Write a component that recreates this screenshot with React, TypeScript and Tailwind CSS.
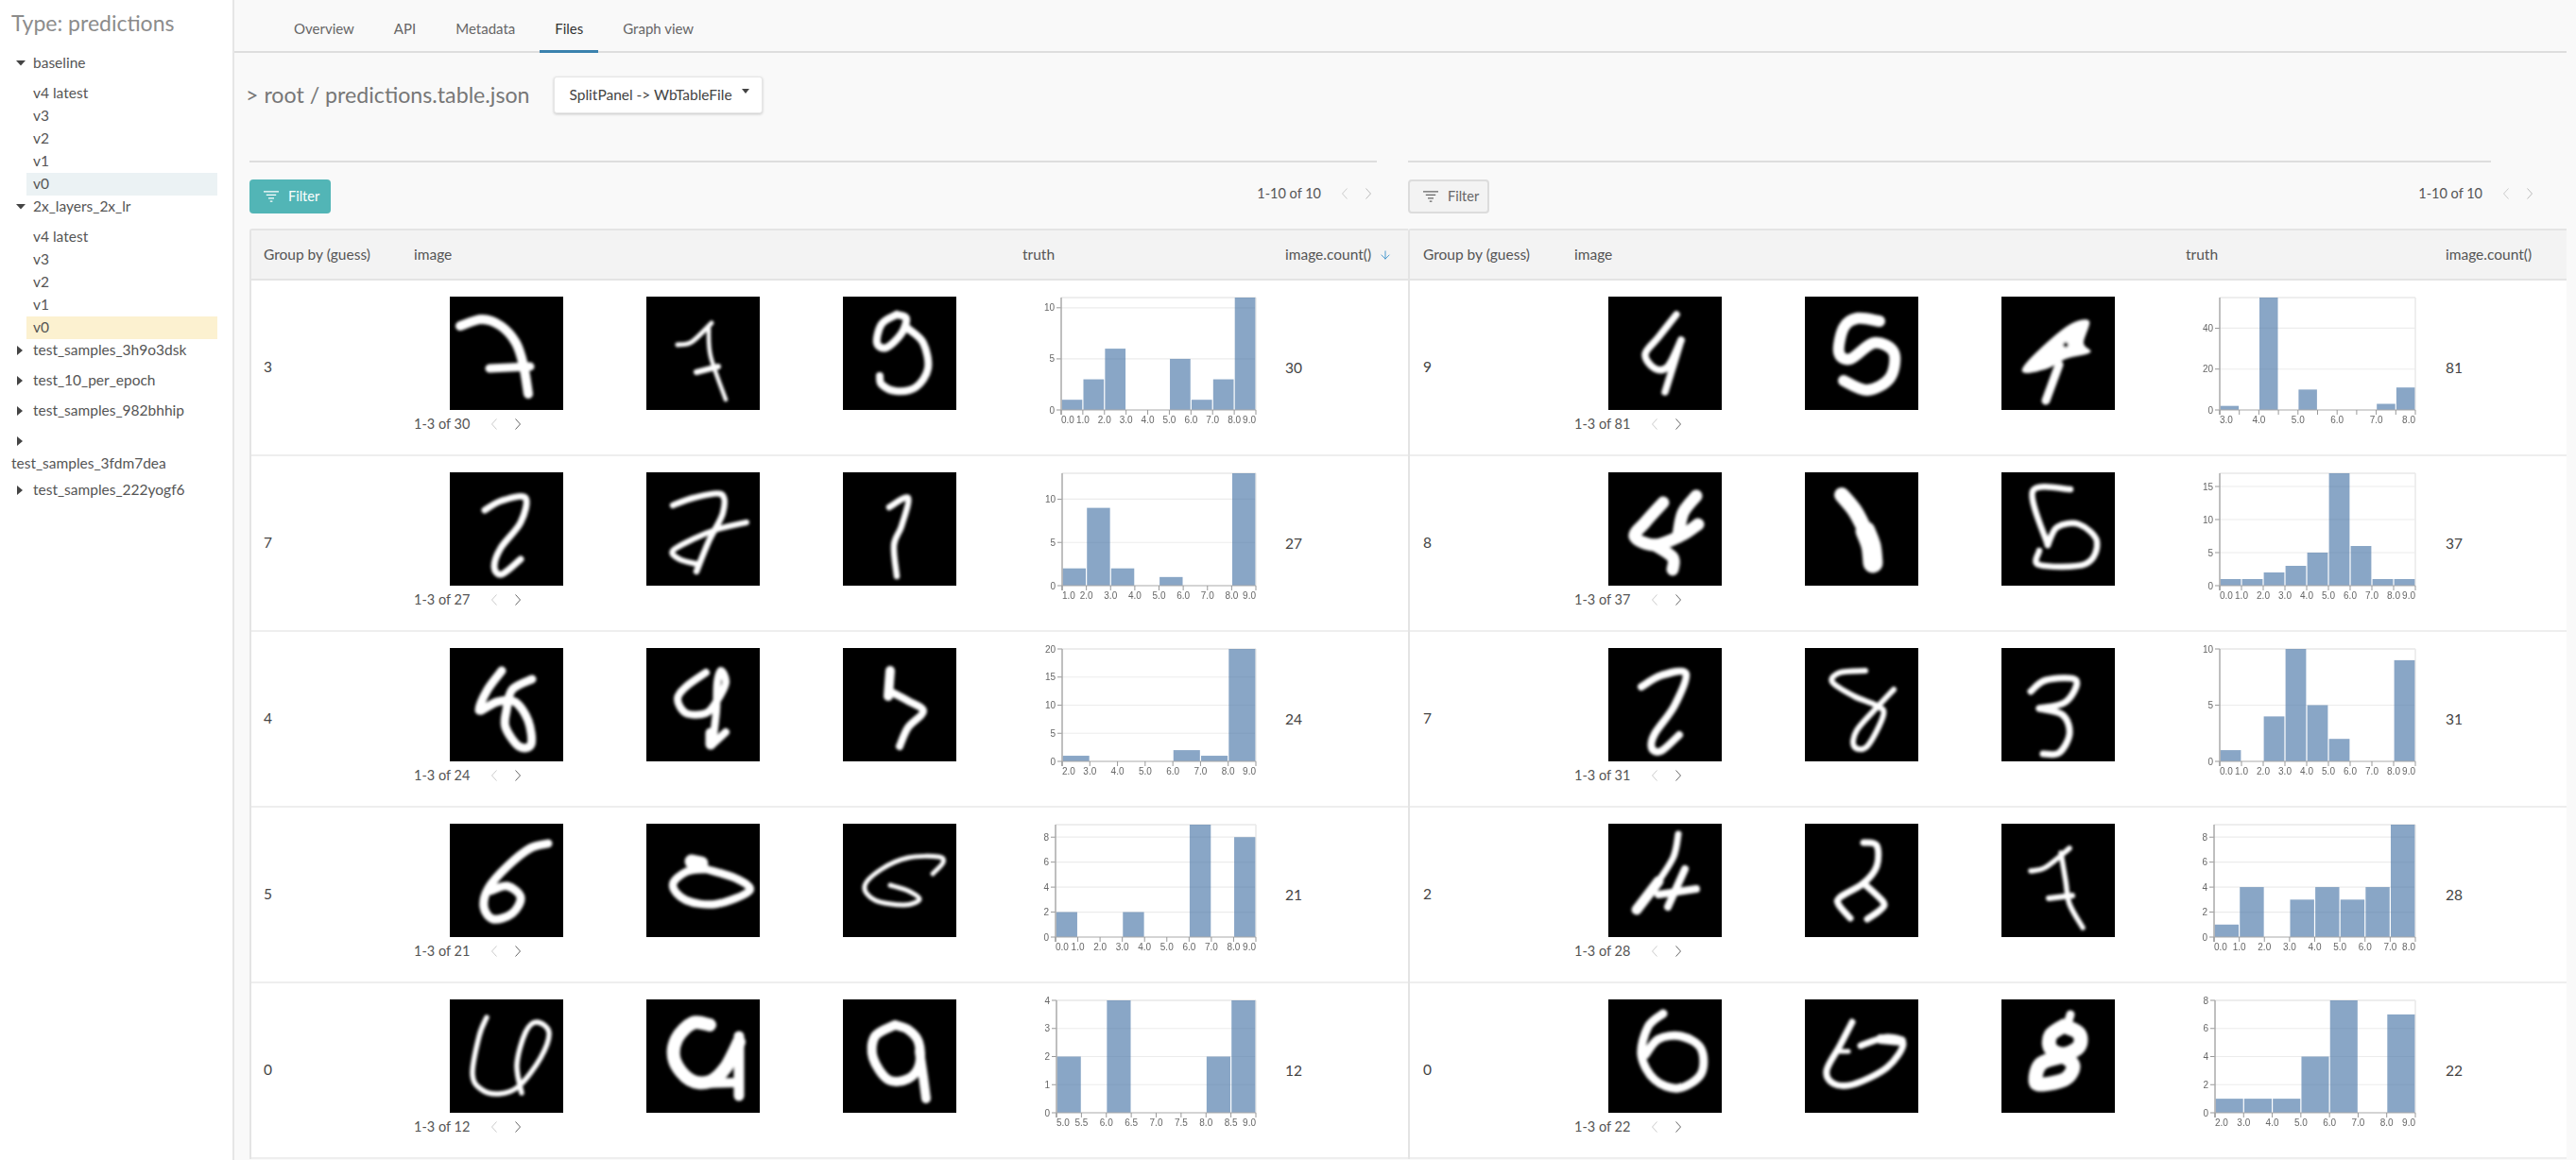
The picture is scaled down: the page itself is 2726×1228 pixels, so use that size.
import { ArrowDown } from "lucide-react";

type Stroke = number[];

type ChartSpec = {
  left: number;
  start: number;
  step: number;
  values: number[];
  ymax: number;
  yticks: number[];
  labelEvery?: number;
};

type Row = {
  group: string;
  count: number;
  digits: Stroke[][];
  chart: ChartSpec;
};

const tabs = ["Overview", "API", "Metadata", "Files", "Graph view"];
const versions = ["v4 latest", "v3", "v2", "v1", "v0"];

// catmull-rom through the traced points. w > 0 stroke, w = 0 white blob, w = -1 black hole
function smooth(p: number[], closed: boolean) {
  const pts: number[][] = [];
  for (let i = 0; i < p.length; i += 2) pts.push([p[i], p[i + 1]]);
  const n = pts.length;
  const at = (i: number) =>
    closed ? pts[(i + n) % n] : pts[Math.max(0, Math.min(n - 1, i))];
  let d = `M${pts[0][0]} ${pts[0][1]}`;
  const last = closed ? n : n - 1;
  for (let i = 0; i < last; i++) {
    const [a, b, c, e] = [at(i - 1), at(i), at(i + 1), at(i + 2)];
    d += `C${b[0] + (c[0] - a[0]) / 6} ${b[1] + (c[1] - a[1]) / 6} ${c[0] - (e[0] - b[0]) / 6} ${c[1] - (e[1] - b[1]) / 6} ${c[0]} ${c[1]}`;
  }
  return d + (closed ? "Z" : "");
}

function Digit({ strokes }: { strokes: Stroke[] }) {
  return (
    <svg width="120" height="120" viewBox="0 0 120 120" className="shrink-0 bg-black">
      <defs>
        <filter id="mnist" x="0" y="0" width="120" height="120" filterUnits="userSpaceOnUse">
          <feGaussianBlur stdDeviation="1.7" />
        </filter>
      </defs>
      <g filter="url(#mnist)">
        {strokes.map(([w, ...p], i) =>
          w > 0 ? (
            <path key={i} d={smooth(p, false)} fill="none" stroke="#fff" strokeWidth={w + 1} strokeLinecap="round" strokeLinejoin="round" />
          ) : (
            <path key={i} d={smooth(p, true)} fill={w === 0 ? "#fff" : "#000"} />
          ),
        )}
      </g>
    </svg>
  );
}

function Chart({ spec, right }: { spec: ChartSpec; right: number }) {
  const { left, start, step, values, ymax, yticks, labelEvery = 1 } = spec;
  const top = 18;
  const bottom = 137;
  const bw = (right - left) / values.length;
  const y = (v: number) => bottom - (v / ymax) * (bottom - top);
  const ticks = Array.from({ length: values.length + 1 }, (_, i) => i);
  return (
    <svg width="278" height="160" className="block font-['Liberation_Sans',sans-serif] blur-[0.4px]">
      <line x1={left} x2={right} y1={top} y2={top} stroke="#e8e8e8" strokeWidth="1.5" />
      <line x1={right} x2={right} y1={top} y2={bottom} stroke="#e8e8e8" strokeWidth="1.5" />
      {yticks.map((t) => (
        <g key={t}>
          {t > 0 && <line x1={left} x2={right} y1={y(t)} y2={y(t)} stroke="#ececec" strokeWidth="1.2" />}
          <line x1={left - 5} x2={left} y1={y(t)} y2={y(t)} stroke="#999" />
          <text x={left - 7} y={y(t) + 3.5} textAnchor="end" fontSize="10" fill="#666">
            {t}
          </text>
        </g>
      ))}
      {values.map((v, i) =>
        v > 0 ? (
          <rect key={i} x={left + i * bw + 0.6} y={y(v)} width={bw - 1.2} height={bottom - y(v)} fill="#4c78a8" fillOpacity="0.66" />
        ) : null,
      )}
      <line x1={left} x2={left} y1={top} y2={bottom + 5} stroke="#aaa" strokeWidth="1.5" />
      <line x1={left} x2={right} y1={bottom} y2={bottom} stroke="#aaa" strokeWidth="1.2" />
      {ticks.map((i) => {
        const x = left + i * bw;
        const anchor = i === 0 ? "start" : i === values.length ? "end" : "middle";
        return (
          <g key={i}>
            <line x1={x} x2={x} y1={bottom} y2={bottom + 5} stroke="#999" />
            {i % labelEvery === 0 && (
              <text x={x} y={bottom + 14} textAnchor={anchor} fontSize="10" fill="#666">
                {(start + i * step).toFixed(1)}
              </text>
            )}
          </g>
        );
      })}
    </svg>
  );
}

function Pager({ dark = "#666" }: { dark?: string }) {
  return (
    <div className="flex items-center gap-[17px]">
      <svg width="8" height="14" viewBox="0 0 8 14" fill="none" stroke="#ccc" strokeWidth="1">
        <path d="M6.5 1.5 1.5 7l5 5.5" />
      </svg>
      <svg width="8" height="14" viewBox="0 0 8 14" fill="none" stroke={dark} strokeWidth="1">
        <path d="M1.5 1.5 6.5 7l-5 5.5" />
      </svg>
    </div>
  );
}

function FilterIcon({ color }: { color: string }) {
  return (
    <svg width="16" height="12" viewBox="0 0 16 12" fill="none" stroke={color} strokeWidth="1.2">
      <path d="M0 .8h16M2.8 4.3h10.4M5 7.8h6M6.8 11.2h2.6" />
    </svg>
  );
}

function Caret({ open }: { open: boolean }) {
  return open ? (
    <svg width="10" height="6" viewBox="0 0 10 6" className="absolute left-[5px] top-[9px]">
      <path d="M0 0h10L5 5.5z" fill="#444" />
    </svg>
  ) : (
    <svg width="6" height="10" viewBox="0 0 6 10" className="absolute left-[6px] top-[7px]">
      <path d="M0 0l6 5-6 5z" fill="#444" />
    </svg>
  );
}

function TreeGroup({ name, open = false, selected }: { name: string; open?: boolean; selected?: string }) {
  return (
    <div>
      <div className="relative mb-2 flex h-6 items-center pl-[23px] text-[#555]">
        <Caret open={open} />
        {name}
      </div>
      {open &&
        versions.map((v) => (
          <div
            key={v}
            className={`ml-4 flex h-6 w-[202px] items-center pl-[7px] text-[#555] ${v === "v0" ? selected : ""}`}
          >
            {v}
          </div>
        ))}
    </div>
  );
}

function Table({
  rows,
  cols,
  right,
  imgPad,
  cellPad,
  sortArrow,
}: {
  rows: Row[];
  cols: string;
  right: number;
  imgPad: string;
  cellPad: string;
  sortArrow?: boolean;
}) {
  return (
    <div className="border-l-2 border-t-2 border-[#e4e4e4] rounded-tl-[3px]">
      <div className={`grid h-[53px] items-center border-b-2 border-[#e4e4e4] bg-[#f3f3f3] text-[#555] ${cols}`}>
        <div className={cellPad}>Group by (guess)</div>
        <div className={cellPad}>image</div>
        <div className={cellPad}>truth</div>
        <div className={`flex items-center gap-2 ${cellPad}`}>
          image.count()
          {sortArrow && <ArrowDown size={14} strokeWidth={1.6} className="text-[#3f94cc]" />}
        </div>
      </div>
      {rows.map((r) => (
        <div key={r.group + r.count} className={`grid h-[186px] border-b-2 border-[#eeeeee] bg-white text-[#444] ${cols}`}>
          <div className={`flex items-center ${cellPad}`}>{r.group}</div>
          <div className="pt-[17px]">
            <div className={`flex gap-[88px] ${imgPad}`}>
              {r.digits.map((d, i) => (
                <Digit key={i} strokes={d} />
              ))}
            </div>
            <div className={`mt-[5px] flex h-5 items-center gap-[22px] text-[14.5px] text-[#555] ${cellPad}`}>
              <span>1-3 of {r.count}</span>
              <Pager />
            </div>
          </div>
          <div>
            <Chart spec={r.chart} right={right} />
          </div>
          <div className={`flex items-center pt-0.5 ${cellPad}`}>{r.count}</div>
        </div>
      ))}
    </div>
  );
}

const leftRows: Row[] = [
  {
    group: "3",
    count: 30,
    digits: [
      [[9, 11, 31, 34, 24, 54, 31, 70, 49, 78, 73, 83, 103], [8, 42, 76, 85, 74]],
      [[4, 33, 51, 48, 48, 69, 28], [3.5, 66, 33, 68, 63, 84, 109], [5, 53, 80, 76, 74]],
      [[7, 57, 19, 41, 29, 36, 49, 46, 54, 62, 39, 67, 23, 57, 19], [7, 69, 34, 85, 49, 90, 76, 77, 96, 56, 100, 41, 93, 39, 84]],
    ],
    chart: { left: 54, start: 0, step: 1, values: [1, 3, 6, 0, 0, 5, 1, 3, 11], ymax: 11, yticks: [0, 5, 10] },
  },
  {
    group: "7",
    count: 27,
    digits: [
      [[6, 37, 40, 55, 30, 80, 27, 75, 53, 54, 80, 47, 100, 55, 108, 75, 92]],
      [[5.5, 28, 35, 50, 27, 79, 23, 81, 43, 66, 73, 53, 105], [5, 106, 53, 76, 60, 51, 70, 28, 83, 35, 92, 53, 97]],
      [[5.5, 49, 37, 69, 27, 62, 57, 54, 77, 57, 110]],
    ],
    chart: { left: 55, start: 1, step: 1, values: [2, 9, 2, 0, 1, 0, 0, 13], ymax: 13, yticks: [0, 5, 10] },
  },
  {
    group: "4",
    count: 24,
    digits: [
      [[8, 55, 24, 40, 44, 31, 66, 50, 57, 69, 57, 83, 77, 86, 102, 73, 104, 59, 84, 60, 66, 66, 44, 87, 33]],
      [[7, 63, 26, 42, 41, 33, 54, 42, 69, 63, 69, 74, 57, 84, 37, 79, 24, 75, 37, 74, 67, 70, 101], [7, 70, 102, 84, 89], [10, 68, 90, 68, 102]],
      [[9, 50, 24, 48, 51], [7, 50, 46, 69, 56, 85, 67, 69, 84, 60, 104]],
    ],
    chart: { left: 55, start: 2, step: 1, values: [1, 0, 0, 0, 2, 1, 20], ymax: 20, yticks: [0, 5, 10, 15, 20] },
  },
  {
    group: "5",
    count: 21,
    digits: [
      [[8, 104, 21, 85, 26, 61, 45, 41, 68, 36, 88, 46, 101, 66, 95, 75, 78, 61, 66, 43, 71]],
      [[7.5, 63, 48, 42, 51, 28, 65, 42, 81, 74, 85, 109, 71, 95, 58, 63, 48], [14, 48, 40, 58, 42]],
      [[4, 95, 53, 106, 41, 101, 35, 69, 36, 41, 48, 23, 66, 34, 81, 65, 86, 81, 80, 69, 71, 50, 65]],
    ],
    chart: { left: 48, start: 0, step: 1, values: [2, 0, 0, 2, 0, 0, 9, 0, 8], ymax: 9, yticks: [0, 2, 4, 6, 8] },
  },
  {
    group: "0",
    count: 12,
    digits: [
      [[4.5, 39, 19, 31, 39, 24, 79, 33, 95, 52, 100, 73, 92, 96, 62, 105, 35, 92, 24, 80, 35, 71, 69, 76, 99]],
      [[13, 67, 27, 49, 25, 32, 42, 30, 65, 46, 85, 67, 87, 84, 72, 98, 45], [10, 98, 39, 98, 102], [9, 56, 89, 95, 88]],
      [[9, 55, 27, 34, 39, 32, 62, 48, 85, 69, 84, 81, 69, 80, 45, 69, 32, 55, 27], [9, 81, 55, 85, 82, 88, 105]],
    ],
    chart: { left: 49, start: 5, step: 0.5, values: [2, 0, 4, 0, 0, 0, 2, 4], ymax: 4, yticks: [0, 1, 2, 3, 4] },
  },
];

const rightRows: Row[] = [
  {
    group: "9",
    count: 81,
    digits: [
      [[6.5, 72, 19, 53, 43, 39, 61, 49, 76, 63, 74, 77, 46], [6.5, 77, 46, 70, 69, 60, 101]],
      [[11, 79, 26, 55, 23, 41, 33, 36, 59, 48, 66, 73, 49, 94, 59, 90, 86, 66, 99, 41, 89]],
      [[0, 93, 26, 75, 28, 51, 46, 24, 73, 26, 81, 49, 76, 68, 66, 94, 59, 87, 49], [8, 61, 72, 47, 110], [-1, 68, 48, 71, 51, 68, 54, 65, 51]],
    ],
    chart: { left: 50, start: 3, step: 0.5, values: [2, 0, 55, 0, 10, 0, 0, 0, 3, 11], ymax: 55, yticks: [0, 20, 40], labelEvery: 2 },
  },
  {
    group: "8",
    count: 37,
    digits: [
      [[12, 58, 32, 39, 53, 28, 68, 49, 77, 77, 67, 95, 55], [12, 49, 77, 68, 90, 68, 103], [12, 93, 25, 79, 43, 74, 67]],
      [[15, 39, 24, 53, 41, 64, 62], [20, 64, 62, 70, 78, 72, 96]],
      [[5.5, 73, 18, 33, 20, 49, 77], [5.5, 49, 77, 59, 58, 82, 55, 101, 73, 89, 97, 40, 98, 40, 83]],
    ],
    chart: { left: 50, start: 0, step: 1, values: [1, 1, 2, 3, 5, 17, 6, 1, 1], ymax: 17, yticks: [0, 5, 10, 15] },
  },
  {
    group: "7",
    count: 31,
    digits: [
      [[7, 35, 41, 56, 29, 82, 27, 70, 61, 49, 91, 46, 106, 56, 109, 75, 92]],
      [[5, 64, 24, 37, 26, 29, 36, 52, 51, 76, 61, 83, 71, 66, 104, 52, 104, 55, 87, 78, 61, 94, 44]],
      [[6, 31, 46, 47, 34, 79, 34, 68, 57, 40, 64], [6, 40, 64, 65, 71, 72, 91, 61, 111, 44, 112]],
    ],
    chart: { left: 50, start: 0, step: 1, values: [1, 0, 4, 10, 5, 2, 0, 0, 9], ymax: 10, yticks: [0, 5, 10] },
  },
  {
    group: "2",
    count: 28,
    digits: [
      [[6, 74, 11, 69, 35, 53, 61], [10, 53, 61, 30, 91], [7, 81, 48, 63, 88], [7, 93, 69, 53, 75]],
      [[6, 62, 20, 76, 23, 76, 45, 62, 63, 37, 78, 36, 86, 48, 100], [6, 62, 63, 83, 83, 80, 91, 66, 101]],
      [[4.5, 31, 50, 47, 46, 72, 26], [4.5, 63, 31, 68, 61, 72, 85, 86, 110], [5, 50, 79, 75, 76]],
    ],
    chart: { left: 44, start: 0, step: 1, values: [1, 4, 0, 3, 4, 3, 4, 9], ymax: 9, yticks: [0, 2, 4, 6, 8] },
  },
  {
    group: "0",
    count: 22,
    digits: [
      [[8, 58, 15, 42, 29, 35, 59, 49, 85, 74, 94, 98, 79, 98, 52, 77, 39, 53, 42, 39, 59]],
      [[6, 50, 24, 37, 49, 23, 75, 30, 89, 51, 90, 87, 72, 104, 47, 87, 40, 59, 49], [4, 37, 55, 46, 55], [9, 80, 42, 102, 44]],
      [
        [14, 66, 28, 82, 36, 82, 50, 66, 58, 52, 52, 52, 38, 66, 28],
        [14, 66, 60, 76, 70, 68, 84, 44, 90, 36, 86, 42, 68, 66, 60],
        [8, 73, 16, 70, 26],
      ],
    ],
    chart: { left: 45, start: 2, step: 1, values: [1, 1, 1, 4, 8, 0, 7], ymax: 8, yticks: [0, 2, 4, 6, 8] },
  },
];

export default function App() {
  return (
    <div className="flex h-[1228px] w-full overflow-hidden bg-white font-['Lato',sans-serif] text-[15.5px]">
      <aside className="w-[248px] shrink-0 border-r-2 border-[#e6e6e6] pl-3">
        <h1 className="flex h-[55px] items-center pb-[7px] text-[23px] text-[#8c8c8c]">Type: predictions</h1>
        <TreeGroup name="baseline" open selected="bg-[#ebf2f4]" />
        <TreeGroup name="2x_layers_2x_lr" open selected="bg-[#fcf1d0]" />
        <TreeGroup name="test_samples_3h9o3dsk" />
        <TreeGroup name="test_10_per_epoch" />
        <TreeGroup name="test_samples_982bhhip" />
        <div className="relative h-6">
          <Caret open={false} />
        </div>
        <div className="mb-1 flex h-6 items-center text-[#555]">test_samples_3fdm7dea</div>
        <TreeGroup name="test_samples_222yogf6" />
      </aside>

      <main className="min-w-0 flex-1 bg-[#f9f9f9]">
        <nav className="mr-2.5 flex h-14 gap-2.5 border-b-2 border-[#dedede] pl-[47px]">
          {tabs.map((t) => (
            <div
              key={t}
              className={`-mb-0.5 flex items-center border-b-[3px] px-4 pt-2 text-[15px] ${t === "Files" ? "border-[#3b82ae] text-[#333]" : "border-transparent text-[#666]"}`}
            >
              {t}
            </div>
          ))}
        </nav>

        <div className="pl-4">
          <div className="mt-[25px] flex h-[39px] items-center gap-[25px]">
            <h2 className="-ml-1 text-[23.2px] text-[#777]">&gt; root / predictions.table.json</h2>
            <button
              type="button"
              className="flex h-[39px] w-[221px] items-center justify-between rounded-[3px] border border-[#e6e6e6] bg-white pl-4 pr-[13px] text-[15.5px] text-[#444] shadow-[0_1px_3px_rgba(0,0,0,0.2)]"
            >
              SplitPanel -&gt; WbTableFile
              <svg width="8" height="5" viewBox="0 0 8 5" className="mb-2">
                <path d="M0 0h8L4 5z" fill="#444" />
              </svg>
            </button>
          </div>

          <div className="mt-[50px] flex">
            <section className="w-[1226px] shrink-0">
              <div className="h-0.5 w-[1193px] bg-[#dedede]" />
              <div className="mt-[18px] flex h-9 items-start justify-between pr-[38px]">
                <button type="button" className="flex h-9 w-[86px] items-center gap-2.5 rounded-[4px] bg-[#52b5b6] pl-[15px] text-[14.5px] text-white">
                  <FilterIcon color="#fff" />
                  Filter
                </button>
                <div className="flex h-[30px] items-center gap-[21px] text-[14.5px] text-[#555]">
                  <span>1-10 of 10</span>
                  <Pager dark="#bbb" />
                </div>
              </div>
              <div className="mt-4">
                <Table rows={leftRows} cols="grid-cols-[159px_644px_278px_1fr]" right={260} imgPad="pl-[51px]" cellPad="pl-[13px]" sortArrow />
              </div>
            </section>

            <section className="w-[1226px] shrink-0">
              <div className="h-0.5 w-[1146px] bg-[#dedede]" />
              <div className="mt-[18px] flex h-9 items-start justify-between pr-[35px]">
                <button type="button" className="flex h-9 w-[86px] items-center gap-2.5 rounded-[4px] border-2 border-[#dcdcdc] bg-[#f3f3f3] pl-3.5 text-[14.5px] text-[#666]">
                  <FilterIcon color="#666" />
                  Filter
                </button>
                <div className="flex h-[30px] items-center gap-[21px] text-[14.5px] text-[#555]">
                  <span>1-10 of 10</span>
                  <Pager dark="#bbb" />
                </div>
              </div>
              <div className="mt-4">
                <Table rows={rightRows} cols="grid-cols-[160px_647px_275px_1fr]" right={257} imgPad="pl-[50px]" cellPad="pl-[14px]" />
              </div>
            </section>
          </div>
        </div>
      </main>
    </div>
  );
}
